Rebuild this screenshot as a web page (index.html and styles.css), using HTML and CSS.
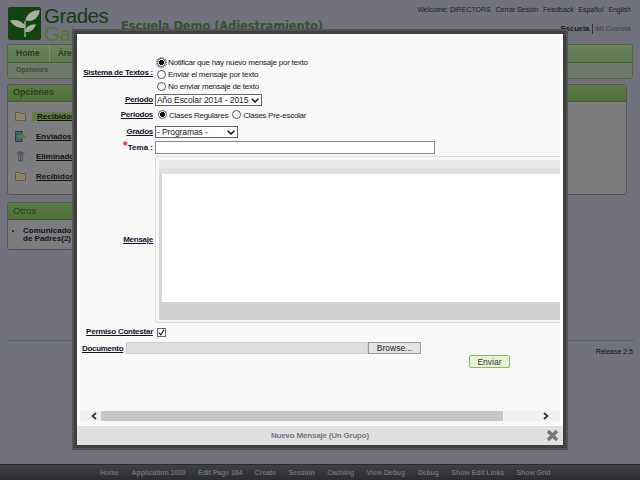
FILE: index.html
```html
<!DOCTYPE html>
<html lang="es">
<head>
<meta charset="utf-8">
<title>Escuela Demo</title>
<link rel="stylesheet" href="styles.css">
</head>
<body>
<div class="page">
  <header class="top">
    <div class="logo">
      <div class="logo-mark">
        <svg width="33" height="33" viewBox="0 0 33 33"><path d="M17 30V14M17 20C13 13 8 13 3 14 7 20 12 21 17 20ZM18 13C20 7 25 4 31 4 30 10 25 15 18 13ZM18 24C19 19 22 18 27 18 25 23 22 25 18 24Z" fill="#a9b0a2" stroke="#a9b0a2" stroke-width="1.3"/></svg>
      </div>
      <div class="logo-text"><span>Grades</span><span class="logo-two">Gains</span></div>
    </div>
    <h1 class="school">Escuela Demo (Adiestramiento)</h1>
    <div class="top-right">
      <div class="welcome"><span>Welcome: DIRECTORS</span><span>Cerrar Sesión</span><span>Feedback</span><span>Español</span><span>English</span></div>
      <div class="tabs"><b>Escuela</b><span>Mi Cuenta</span></div>
    </div>
  </header>
  <nav class="nav">
    <div class="nav-main"><span class="nav-item">Home</span><span class="nav-item">Área</span></div>
    <div class="nav-sub">Opciones</div>
  </nav>
  <aside class="side">
    <section class="panel p1">
      <h2>Opciones</h2>
      <ul class="menu">
        <li><svg class="ico" width="11" height="10" viewBox="0 0 11 10"><path d="M.5 1.5h4l1 1h5v7h-10z" fill="#8f8668" stroke="#5f5a47"/></svg><a class="cur">Recibidos</a></li>
        <li><svg class="ico" width="11" height="11" viewBox="0 0 11 11"><path d="M.5.5h7v10h-7z" fill="#46607a" stroke="#2c3c50"/><path d="M3 4h4V2l4 3.5L7 9V7H3z" fill="#4f7d3a"/></svg><a>Enviados</a></li>
        <li><svg class="ico" width="11" height="11" viewBox="0 0 11 11"><path d="M1.5 2h8M4 1h3" stroke="#3f4650" stroke-width="1.2"/><path d="M2.5 3h6l-.7 7.5H3.2z" fill="#4e5663"/><path d="M4.3 4v5M6.7 4v5" stroke="#777d88" stroke-width=".8"/></svg><a>Eliminados</a></li>
        <li><svg class="ico" width="11" height="10" viewBox="0 0 11 10"><path d="M.5 1.5h4l1 1h5v7h-10z" fill="#8f8668" stroke="#5f5a47"/></svg><a>Recibidos</a></li>
      </ul>
    </section>
    <section class="panel p2">
      <h2>Otros</h2>
      <ul class="bul"><li>Comunicados de Padres(2)</li></ul>
    </section>
  </aside>
  <div class="rule"></div>
  <div class="release">Release 2.5</div>
  <footer class="dev">
    <span>Home</span><span>Application 1020</span><span>Edit Page 164</span><span>Create</span><span>Session</span><span>Caching</span><span>View Debug</span><span>Debug</span><span>Show Edit Links</span><span>Show Grid</span>
  </footer>
</div>

<div class="modal">
  <div class="content">
    <form class="form">
      <div class="row r-sms">
        <label class="lab">Sistema de Textos :</label>
        <div class="radios">
          <div class="radio-line"><i class="radio on focus"></i>Notificar que hay nuevo mensaje por texto</div>
          <div class="radio-line"><i class="radio"></i>Enviar el mensaje por texto</div>
          <div class="radio-line"><i class="radio"></i>No enviar mensaje de texto</div>
        </div>
      </div>
      <div class="row r-per">
        <label class="lab">Periodo</label>
        <div class="select s1">Año Escolar 2014 - 2015<svg width="8" height="5" viewBox="0 0 8 5"><path d="M.7.7L4 4 7.3.7" fill="none" stroke="#111" stroke-width="1.5"/></svg></div>
      </div>
      <div class="row r-pers">
        <label class="lab">Periodos</label>
        <div class="inline-radios"><i class="radio on"></i><span>Clases Regulares</span><i class="radio"></i><span>Clases Pre-escolar</span></div>
      </div>
      <div class="row r-gra">
        <label class="lab">Grados</label>
        <div class="select s2">- Programas -<svg width="8" height="5" viewBox="0 0 8 5"><path d="M.7.7L4 4 7.3.7" fill="none" stroke="#111" stroke-width="1.5"/></svg></div>
      </div>
      <div class="row r-tema">
        <label class="lab plain"><em>*</em>Tema :</label>
        <div class="input"></div>
      </div>
      <div class="row r-msg">
        <label class="lab">Mensaje</label>
        <div class="editor">
          <div class="ed-in">
            <div class="ed-bar"></div>
            <div class="ed-body"><div class="ed-white"></div></div>
            <div class="ed-foot"></div>
          </div>
        </div>
      </div>
      <div class="row r-rep">
        <label class="lab">Permiso Contestar</label>
        <i class="check"><svg width="9" height="9" viewBox="0 0 9 9"><path d="M1 4.5l2.5 3L8 1" fill="none" stroke="#111" stroke-width="1.5"/></svg></i>
      </div>
      <div class="doc">
        <label class="lab-doc">Documento</label>
        <div class="file"></div>
        <div class="browse">Browse...</div>
      </div>
      <div class="send"><button type="button" class="enviar">Enviar</button></div>
    </form>
    <div class="hscroll">
      <span class="arrow a-left"><svg width="6" height="8" viewBox="0 0 6 8"><path d="M5 1L1.5 4 5 7" fill="none" stroke="#333" stroke-width="1.7"/></svg></span>
      <div class="thumb"></div>
      <span class="arrow a-right"><svg width="6" height="8" viewBox="0 0 6 8"><path d="M1 1l3.5 3L1 7" fill="none" stroke="#333" stroke-width="1.7"/></svg></span>
    </div>
  </div>
  <div class="modal-foot">
    <span class="title">Nuevo Mensaje (Un Grupo)</span>
    <svg class="close" width="13" height="13" viewBox="0 0 13 13"><path d="M2 2l9 9M11 2l-9 9" stroke="#777" stroke-width="3.4"/></svg>
  </div>
</div>
</body>
</html>
```
FILE: styles.css
```css
* { box-sizing: border-box; }
html, body { margin: 0; height: 100%; }
body { background: #71727d; font-family: "Liberation Sans", Arial, sans-serif; color: #111; overflow: hidden; }
.page { width: 640px; height: 480px; position: relative; display: flex; flex-direction: column; }

.top { height: 44px; display: flex; padding: 7px 9px 0 8px; }
.logo { width: 101px; height: 33px; display: flex; gap: 3px; flex: none; }
.logo-mark { width: 33px; height: 33px; background: #124410; border-radius: 2px; }
.logo-text { display: flex; flex-direction: column; font-size: 20.5px; line-height: 18px; color: #113c12; letter-spacing: -.5px; }
.logo-two { color: #4e7a2c; }
.school { margin: 12px 0 0 12px; font-family: "DejaVu Sans", sans-serif; font-size: 11.5px; font-weight: bold; color: #33532e; white-space: nowrap; line-height: 14px; letter-spacing: -.1px; }
.top-right { flex: 1; }
.welcome { display: flex; justify-content: flex-end; gap: 5px; line-height: 10px; margin-top: -2px; color: #1d1d1d; font-size: 7px; letter-spacing: -.05px; white-space: nowrap; }
.tabs { display: flex; justify-content: flex-end; gap: 3px; font-size: 7.5px; margin-top: 9px; line-height: 10px; color: #4c4d55; white-space: nowrap; }
.tabs b { color: #1b1b1b; }
.tabs span { border-left: 1px solid #333; padding-left: 2px; font-weight: bold; }

.nav { margin: 0 7px 0 7px; height: 35px; border: 1px solid #4c6a38; border-radius: 3px; background: #6f7a68; }
.nav-main { height: 18px; background: linear-gradient(#6b8360, #60784f); border-bottom: 1px solid #46663a; display: flex; }
.nav-item { font-size: 8.5px; font-weight: bold; color: #2c3d25; padding: 3px 9px 0 8px; border-right: 1px solid #7b8f70; }
.nav-sub { font-size: 7px; font-weight: bold; color: #3a4e32; padding: 3px 8px; }

.side { margin: 5px 0 0 7px; width: 620px; flex: 1; }
.panel { border: 1px solid #555; border-radius: 3px; background: #7d7d80; }
.panel h2 { margin: 0; height: 17px; background: linear-gradient(#5f7b48, #4f6d3a); font-size: 9px; line-height: 15px; padding-left: 5px; font-weight: bold; color: #25401a; border-bottom: 1px solid #43592f; }
.p1 { height: 111px; }
.p2 { width: 66px; height: 48px; margin-top: 7px; }
.p2 h2 { font-weight: normal; font-size: 9.5px; }
.menu { list-style: none; margin: 0; padding: 4px 0 0 7px; }
.menu li { height: 20px; display: flex; align-items: center; font-size: 8px; font-weight: bold; color: #111; white-space: nowrap; }
.menu a { text-decoration: underline; margin-left: 10px; padding-left: 0; }
.menu a.cur { background: #637b45; margin-left: 6px; padding-left: 5px; }
.ico { display: block; flex: none; }
.bul { margin: 0; padding: 7px 0 0 15px; font-size: 8px; font-weight: bold; line-height: 8px; color: #12121a; width: 70px; }

.rule { position: absolute; left: 7px; top: 340px; width: 627px; height: 1px; background: #5b6849; }
.release { position: absolute; right: 7px; top: 347px; font-size: 7px; line-height: 10px; color: #111; }
.dev { position: absolute; left: 0; right: 0; bottom: 0; height: 16px; background: linear-gradient(#3f4043, #2b2c2e); border-top: 1px solid #2a2a2a; font-size: 7px; font-weight: bold; color: #6e6f73; display: flex; padding: 3px 0 0 100px; gap: 12.5px; line-height: 10px; letter-spacing: -.1px; }

.modal { position: absolute; left: 74px; top: 31px; width: 492px; height: 417px; border: 3px solid #3f3f3f; outline: 2px solid #525252; background: #fff; display: flex; flex-direction: column; }
.content { height: 392px; display: flex; flex-direction: column; overflow: hidden; border-bottom: 1px solid #fff; background: #f8f8f8; border-left: 3px solid #fff; border-right: 3px solid #fff; }
.form { flex: 1; position: relative; font-size: 8px; padding-top: 22px; }
.row { display: flex; }
.lab { width: 73px; flex: none; text-align: right; font-weight: bold; text-decoration: underline; font-size: 8px; letter-spacing: -.25px; white-space: nowrap; color: #12122a; line-height: 10px; }
.lab.plain { text-decoration: none; letter-spacing: 0; }
.lab em { color: #e33; font-size: 13px; font-style: normal; line-height: 8px; }
.lab + * { margin-left: 2px; }

.r-sms { height: 37px; }
.r-sms .lab { padding-top: 12px; }
.radios { margin-left: 4px !important; }
.radio-line { height: 12px; display: flex; align-items: center; font-size: 8px; letter-spacing: -.25px; color: #222; gap: 2px; white-space: nowrap; line-height: 13px; padding-top: 1px; }
.radio { width: 9px; height: 9px; border: 1px solid #555; border-radius: 50%; background: #fff; display: block; flex: none; margin-top: -1px; }
.radio.on { background: radial-gradient(circle, #111 0 2.4px, #fff 2.8px); }
.radio.focus { outline: 1px dotted #444; }

.r-per { height: 12px; margin-top: 1px; align-items: center; }
.select { height: 12px; border: 1px solid #666; background: #fff; font-size: 8.5px; letter-spacing: -.1px; color: #222; display: flex; align-items: center; justify-content: space-between; padding: 0 2px 0 1px; white-space: nowrap; }
.s1 { width: 107px; }
.s2 { width: 83px; }
.r-pers { height: 12px; margin-top: 3px; align-items: center; }
.inline-radios { display: flex; align-items: center; font-size: 8px; letter-spacing: -.25px; color: #222; margin-left: 5px !important; white-space: nowrap; }
.inline-radios span { margin: 1px 4px 0 2px; }
.r-gra { height: 12px; margin-top: 5px; align-items: center; }
.r-tema { height: 13px; margin-top: 3px; align-items: center; }
.input { width: 280px; height: 13px; border: 1px solid #888; background: #fff; }

.r-msg { height: 167px; margin-top: 2px; align-items: center; }
.editor { flex: 1; height: 167px; border: 1px solid #ddd; border-right: 0; border-radius: 3px 0 0 3px; padding: 3px 0 3px 3px; }
.ed-in { height: 100%; background: #d0d0d0; border-radius: 3px 0 0 3px; display: flex; flex-direction: column; }
.ed-bar { height: 14px; background: linear-gradient(#eaeaea 0 8px, #e0e0e0 8px); flex: none; }
.ed-body { flex: 1; background: #d4d4d4; padding-left: 3px; }
.ed-white { height: 128px; background: #fff; }
.ed-foot { height: 18px; flex: none; background: #d0d0d0; }

.r-rep { margin-top: 4px; height: 10px; align-items: center; }
.check { width: 9px; height: 9px; border: 1px solid #666; background: #fff; display: flex; align-items: center; justify-content: center; margin-left: 4px !important; }
.doc { display: flex; margin-top: 5px; height: 12px; align-items: center; padding-left: 2px; }
.lab-doc { font-weight: bold; text-decoration: underline; font-size: 8px; letter-spacing: -.3px; width: 44px; flex: none; color: #12122a; }
.file { width: 242px; height: 12px; background: #dedede; border: 1px solid #d0d0d0; }
.browse { width: 53px; height: 12px; background: #e4e4e4; border: 1px solid #999; font-size: 8.5px; text-align: center; line-height: 10px; color: #222; }
.send { padding: 1px 0 0 389px; }
.enviar { width: 41px; height: 13px; padding: 0; background: #e4f3d4; border: 1px solid #8bb56a; border-radius: 2px; font: 8.5px "Liberation Sans", Arial, sans-serif; color: #333; }

.hscroll { height: 10px; margin-bottom: 4px; display: flex; background: #f0f0f0; width: 480px; flex: none; }
.arrow { flex: none; display: flex; align-items: center; }
.a-left { width: 21px; padding-left: 11px; }
.a-right { width: 57px; justify-content: flex-end; padding-right: 11px; }
.thumb { flex: 1; background: #c6c6c6; }

.modal-foot { flex: 1; background: #e0e0e0; position: relative; text-align: center; font-size: 8px; letter-spacing: -.2px; font-weight: bold; color: #757580; line-height: 19px; }
.close { position: absolute; right: 4px; top: 3px; }
```
